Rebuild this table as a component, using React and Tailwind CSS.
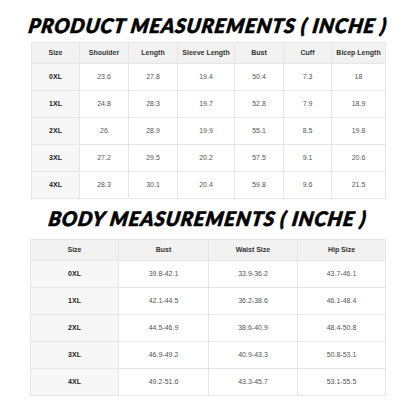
const product = {
  head: ['Size', 'Shoulder', 'Length', 'Sleeve Length', 'Bust', 'Cuff', 'Bicep Length'],
  rows: [
    ['0XL', '23.6', '27.8', '19.4', '50.4', '7.3', '18'],
    ['1XL', '24.8', '28.3', '19.7', '52.8', '7.9', '18.9'],
    ['2XL', '26', '28.9', '19.9', '55.1', '8.5', '19.8'],
    ['3XL', '27.2', '29.5', '20.2', '57.5', '9.1', '20.6'],
    ['4XL', '28.3', '30.1', '20.4', '59.8', '9.6', '21.5'],
  ],
};

const body = {
  head: ['Size', 'Bust', 'Waist Size', 'Hip Size'],
  rows: [
    ['0XL', '39.8-42.1', '33.9-36.2', '43.7-46.1'],
    ['1XL', '42.1-44.5', '36.2-38.6', '46.1-48.4'],
    ['2XL', '44.5-46.9', '38.6-40.9', '48.4-50.8'],
    ['3XL', '46.9-49.2', '40.9-43.3', '50.8-53.1'],
    ['4XL', '49.2-51.6', '43.3-45.7', '53.1-55.5'],
  ],
};

function SizeTable({ data, cols }) {
  return (
    <div className={`grid ${cols} grid-rows-[20px_26px_26px_26px_26px_26px] gap-px bg-[#e6e6e6] p-px`}>
      {data.head.map((h) => (
        <div key={h} className="flex items-center justify-center bg-[#f2f2f2] font-bold text-[#333]">
          {h}
        </div>
      ))}
      {data.rows.map((row) =>
        row.map((cell, i) => (
          <div
            key={row[0] + i}
            className={
              i === 0
                ? 'flex items-center justify-center bg-[#f7f7f7] font-bold text-[#222]'
                : 'flex items-center justify-center bg-white text-[#555]'
            }
          >
            {cell}
          </div>
        ))
      )}
    </div>
  );
}

function Title({ children }) {
  return (
    <h1 className="font-['Lato','Open_Sans',sans-serif] font-black italic text-[20px] leading-none text-black tracking-[1px] -skew-x-[9deg] [-webkit-text-stroke:0.7px_black] whitespace-nowrap">
      {children}
    </h1>
  );
}

export default function App() {
  return (
    <div className="w-[416px] h-[416px] bg-white font-['Liberation_Sans',Arial,sans-serif] text-[7px] overflow-hidden">
      <div className="h-[42px] pt-[8px] flex items-center justify-center">
        <Title>PRODUCT MEASUREMENTS ( INCHE )</Title>
      </div>
      <div className="pl-[31px]">
        <div className="w-[355px]">
          <SizeTable data={product} cols="grid-cols-[47px_48px_48px_56px_48px_47px_53px]" />
        </div>
      </div>
      <div className="h-[40px] pb-[3px] flex items-center justify-center">
        <Title>BODY MEASUREMENTS ( INCHE )</Title>
      </div>
      <div className="pl-[30px]">
        <div className="w-[356px]">
          <SizeTable data={body} cols="grid-cols-[87px_89px_88px_87px]" />
        </div>
      </div>
    </div>
  );
}
